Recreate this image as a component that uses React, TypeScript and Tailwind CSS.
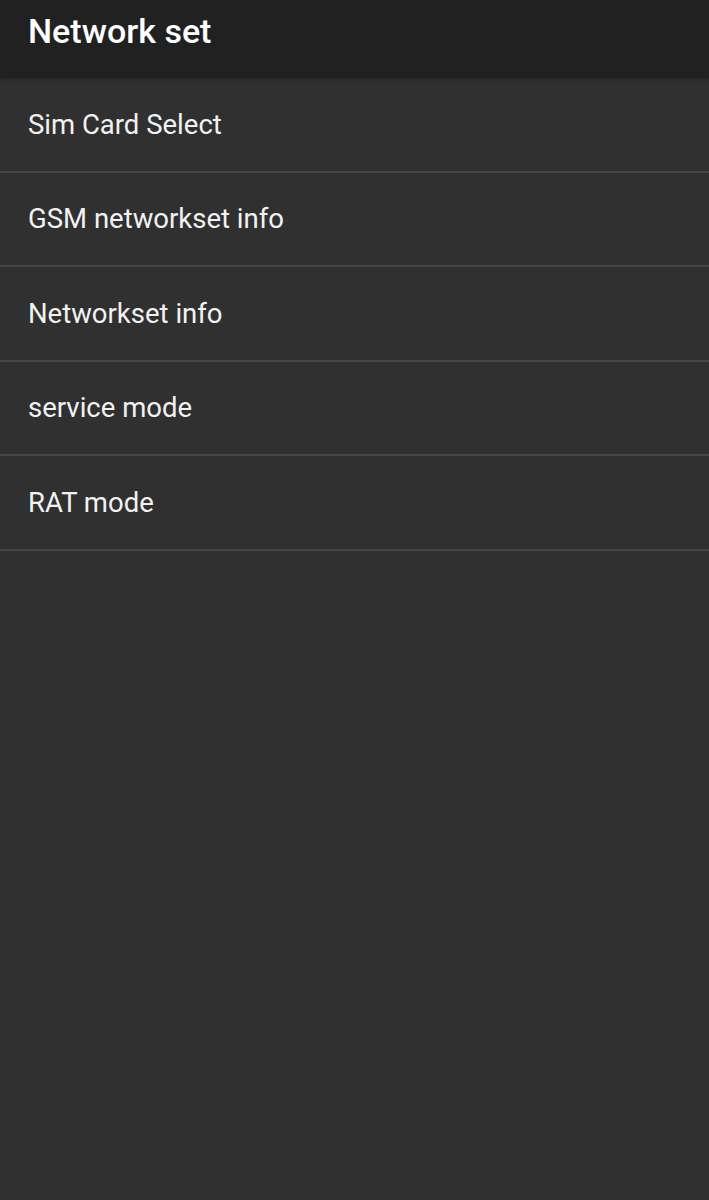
import React from 'react';

const items = ["Sim Card Select", "GSM networkset info", "Networkset info", "service mode", "RAT mode"];

const App = () => {
    return (
        <div className="min-h-[1200px] w-full bg-[#303030]" style={{ fontFamily: "Roboto, 'Noto Sans', sans-serif" }}>
            <div className="h-[78px] bg-[#212121] flex items-start pl-7 pt-[9px] shadow-[0_2px_4px_rgba(0,0,0,0.25)] relative z-10">
                <h1 className="text-white text-[34px] font-medium leading-[44px]">Network set</h1>
            </div>
            <div className="flex flex-col">
                {items.map((item, i) => (
                    <div key={i} className="h-[94.5px] border-b-2 border-[#474747] flex items-center pl-7">
                        <span className="text-[#f2f2f2] text-[27.5px] leading-none">{item}</span>
                    </div>
                ))}
            </div>
        </div>
    )
}

export default App
